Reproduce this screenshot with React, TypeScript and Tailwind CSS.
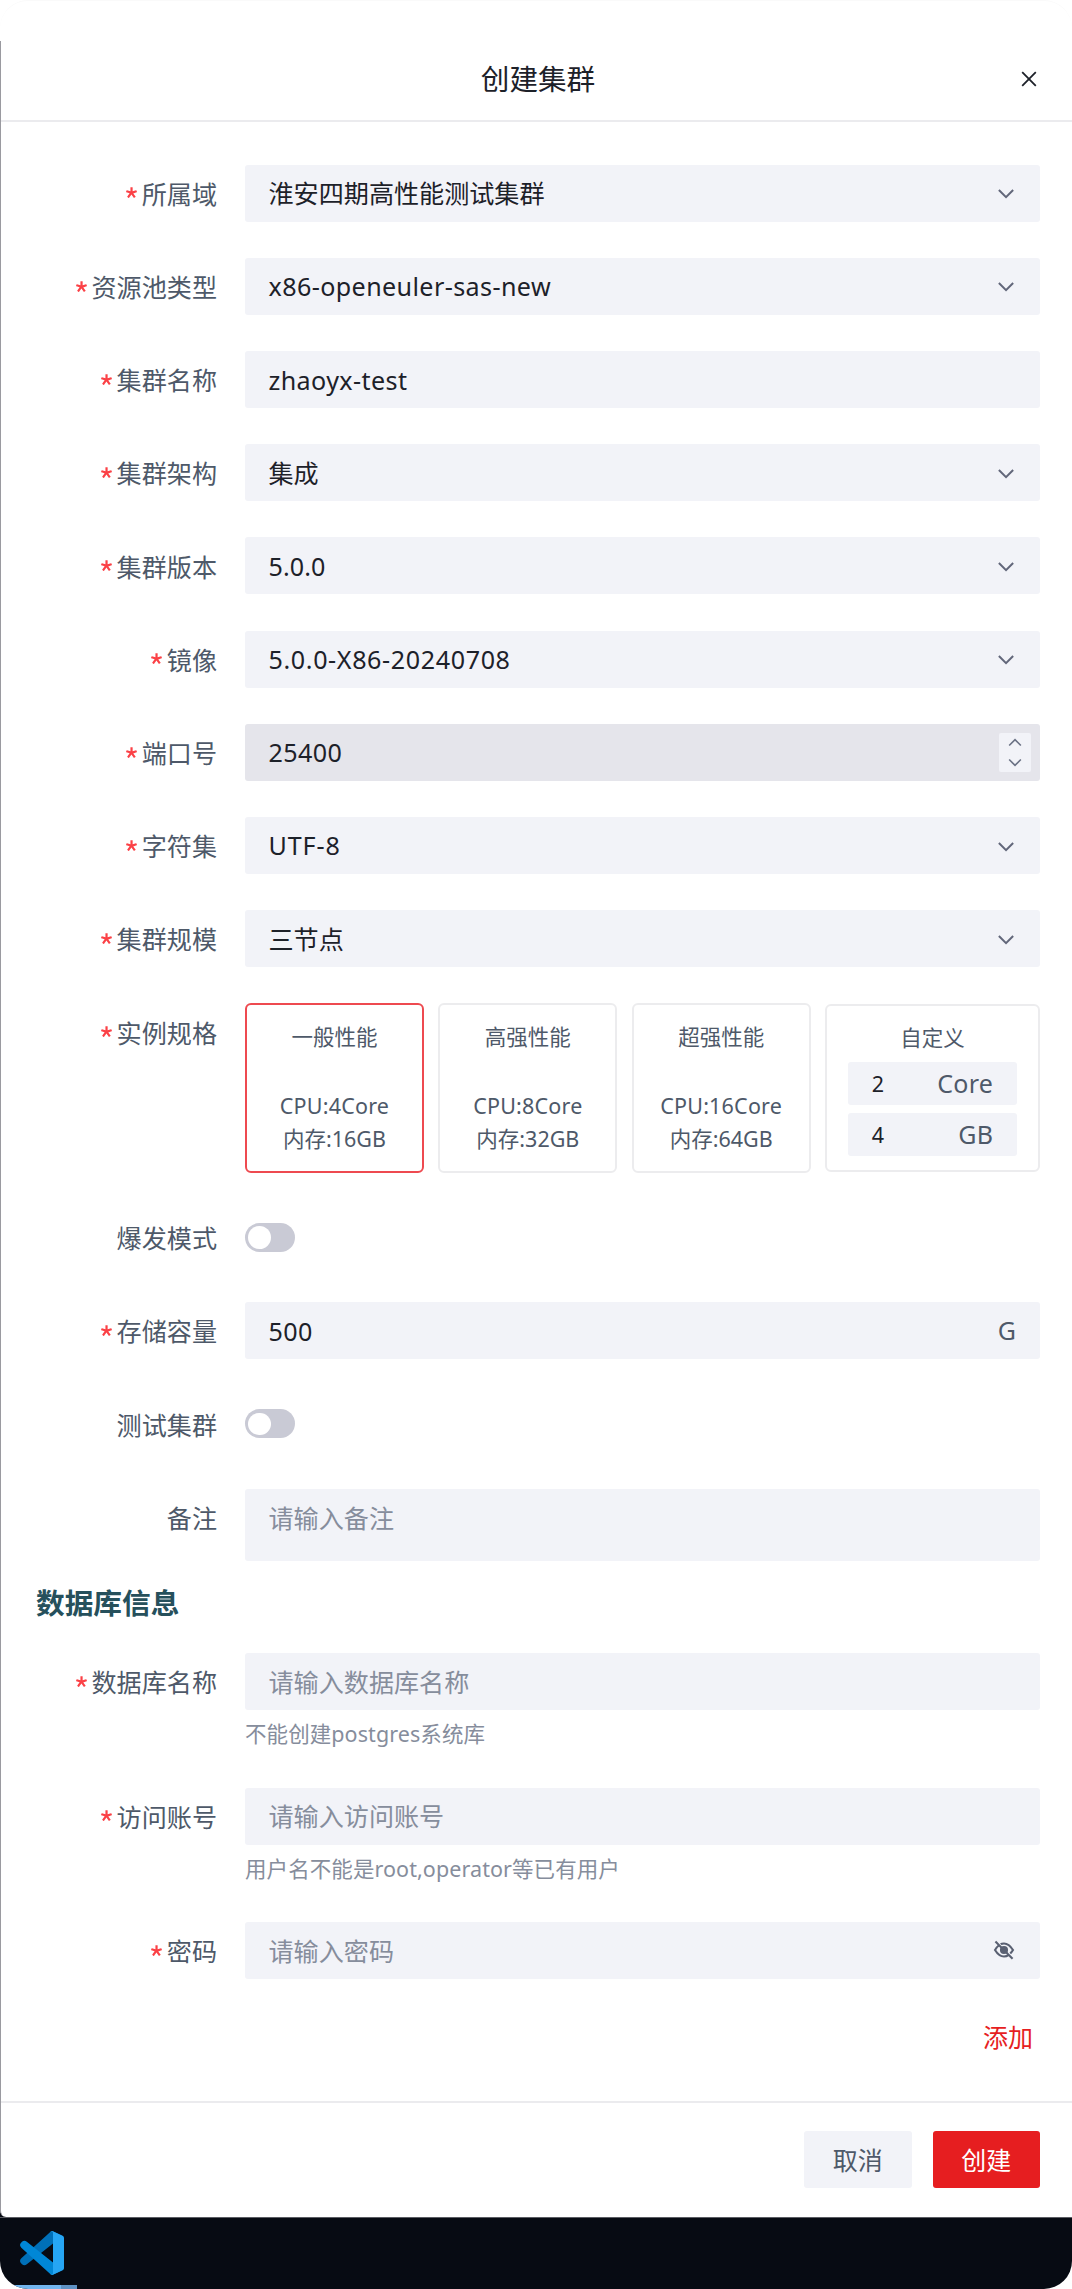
import type { ReactNode } from "react";

function Chevron({ up = false, className = "" }: { up?: boolean; className?: string }) {
  return (
    <svg viewBox="0 0 48 48" fill="none" stroke="currentColor" strokeWidth="4.4" className={className}>
      <path d={up ? "M39.6 30.557 24.043 15 8.487 30.557" : "M39.6 17.443 24.043 33 8.487 17.443"} />
    </svg>
  );
}

function Asterisk() {
  return (
    <svg
      viewBox="0 0 1024 1024"
      fill="currentColor"
      className="mr-[5px] mb-[3px] size-[11px] shrink-0 text-[#fb4146]"
    >
      <path d="M583.338667 17.066667c18.773333 0 34.133333 15.36 34.133333 34.133333v349.013333l313.344-101.888a34.133333 34.133333 0 0 1 43.008 22.016l42.154667 129.706667a34.133333 34.133333 0 0 1-21.845334 43.178667l-315.733333 102.4 208.896 287.744a34.133333 34.133333 0 0 1-7.509333 47.786666l-110.421334 80.213334a34.133333 34.133333 0 0 1-47.786666-7.509334L505.685333 706.218667 288.426667 1005.226667a34.133333 34.133333 0 0 1-47.786667 7.509333l-110.421333-80.213333a34.133333 34.133333 0 0 1-7.509334-47.786667l214.186667-295.253333L29.013333 489.813333a34.133333 34.133333 0 0 1-22.016-43.008l42.154667-129.877333a34.133333 34.133333 0 0 1 43.008-22.016l320.512 104.106667L412.672 51.2c0-18.773333 15.36-34.133333 34.133333-34.133333h136.533334z" />
    </svg>
  );
}

function Row({ label, required = false, children }: { label: string; required?: boolean; children: ReactNode }) {
  return (
    <div className="flex items-start">
      <div className="flex h-[57px] w-[216px] shrink-0 items-center justify-end pt-[2.5px] text-[25.1px] leading-none text-[#4e5969]">
        {required && <Asterisk />}
        <span className="whitespace-nowrap">{label}</span>
      </div>
      <div className="ml-[28px] min-w-0 flex-1">{children}</div>
    </div>
  );
}

function Box({ children, suffix }: { children: ReactNode; suffix?: ReactNode }) {
  return (
    <div className="flex h-[57px] items-center justify-between rounded-[3px] bg-[#f2f3f8] pr-[24px] pl-[23.5px]">
      {children}
      {suffix}
    </div>
  );
}

function Value({ text, className = "tracking-[0.4px]" }: { text: string; className?: string }) {
  return <span className={`pt-px text-[25.1px] leading-none text-[#1d2129] ${className}`}>{text}</span>;
}

function Field({
  label,
  value,
  select = false,
  valueClass,
}: {
  label: string;
  value: string;
  select?: boolean;
  valueClass?: string;
}) {
  return (
    <Row label={label} required>
      <Box suffix={select && <Chevron className="-mr-px size-[22px] text-[#62677a]" />}>
        <Value text={value} className={valueClass} />
      </Box>
    </Row>
  );
}

function Placeholder({ text }: { text: string }) {
  return <span className="pt-[2px] text-[25.1px] leading-none text-[#868d9c]">{text}</span>;
}

function Help({ children }: { children: ReactNode }) {
  return (
    <p className="flex h-[41px] items-start pt-[8px] text-[21.5px] leading-[31px] tracking-[0.08px] text-[#868d9c]">
      {children}
    </p>
  );
}

function Toggle() {
  return (
    <div className="flex h-[57px] items-center">
      <div className="flex h-[29px] w-[50px] items-center rounded-full bg-[#c9cad5] px-[3px]">
        <div className="size-[22.5px] rounded-full bg-white" />
      </div>
    </div>
  );
}

function SpecCard({ title, cpu, mem, active = false }: { title: string; cpu: number; mem: number; active?: boolean }) {
  return (
    <div
      className={`flex h-[170px] w-[179px] shrink-0 flex-col items-center rounded-[6px] border-2 pt-[15px] text-[21.5px] leading-[33px] text-[#4e5969] ${
        active ? "border-[#ee4a50]" : "border-[#ececee]"
      }`}
    >
      <div>{title}</div>
      <div className="mt-[36px] tracking-[0.2px]">CPU:{cpu}Core</div>
      <div>内存:{mem}GB</div>
    </div>
  );
}

function CustomInput({ value, unit }: { value: string; unit: string }) {
  return (
    <div className="flex h-[43px] w-[168.5px] items-center justify-between rounded-[3px] bg-[#f2f3f8] px-[23.5px]">
      <span className="text-[21.5px] leading-none text-[#1d2129]">{value}</span>
      <span className="text-[25px] leading-none tracking-[0.3px] text-[#4e5969]">{unit}</span>
    </div>
  );
}

function EyeOff() {
  return (
    <svg viewBox="0 0 48 48" fill="none" stroke="currentColor" strokeWidth="4.2" className="size-[24px] text-[#5a6072]">
      <path d="M14 14.5c-2.69 2-5.415 5.33-8 9.5 5.373 8.667 11.373 13 18 13 3.325 0 6.491-1.09 9.5-3.271M17.463 12.5C19 11 21.75 11 24 11c6.627 0 12.627 4.333 18 13-1.766 2.848-3.599 5.228-5.5 7.14" />
      <path d="M6.852 7.103l34.294 34.294" />
      <circle cx="24" cy="24" r="6" fill="currentColor" />
    </svg>
  );
}

function CodeLogo() {
  return (
    <svg viewBox="0 0 100 100" className="size-[44px]">
      <path
        fill="#0070b8"
        d="M96.46 10.8 75.86.88a6.23 6.23 0 0 0-7.1 1.21L3 62a8.5 8.5 0 0 0 0 12l1.5 1.5a8.5 8.5 0 0 0 11 0L75 28.5V12l25 4.43a6.25 6.25 0 0 0-3.54-5.63Z"
      />
      <path
        fill="#0087d6"
        d="m96.46 89.2-20.6 9.92a6.23 6.23 0 0 1-7.1-1.21L3 38a8.5 8.5 0 0 1 0-12l1.5-1.5a8.5 8.5 0 0 1 11 0L75 71.5V88l25-4.43a6.25 6.25 0 0 1-3.54 5.63Z"
      />
      <path
        fill="#26a6f4"
        d="M75.86 99.13a6.23 6.23 0 0 1-7.1-1.21A3.66 3.66 0 0 0 75 95.33V4.67a3.66 3.66 0 0 0-6.25-2.59 6.23 6.23 0 0 1 7.1-1.21l20.6 9.91a6.25 6.25 0 0 1 3.55 5.63v67.18a6.25 6.25 0 0 1-3.54 5.63l-20.6 9.91Z"
      />
    </svg>
  );
}

export default function App() {
  return (
    <div className="bg-white">
      <div
        lang="zh-CN"
        className="flex h-[2289px] w-[1072px] flex-col overflow-hidden rounded-b-[28px] bg-[#070b13] font-['Noto_Sans','Noto_Sans_CJK_SC',sans-serif]"
      >
        <div className="h-[41px] shrink-0 bg-white">
          <div className="h-7 rounded-t-[28px] border-t border-[#fafafa]" />
        </div>
        <div className="flex h-[2176px] shrink-0 flex-col rounded-bl-[6px] border-l border-[#9a9aa0] bg-white">
          <header className="relative flex h-[81px] shrink-0 items-center justify-center border-b-2 border-[#ebebee]">
            <h1 className="mb-[2px] ml-[3px] text-[28.6px] leading-none text-[#1d2129]">创建集群</h1>
            <svg
              viewBox="0 0 16 16"
              stroke="#1d2129"
              strokeWidth="1.8"
              className="absolute top-[30px] right-[35px] size-4"
            >
              <path d="m1.2 1.2 13.6 13.6M14.8 1.2 1.2 14.8" />
            </svg>
          </header>

          <main className="flex flex-col pt-[42.7px] pr-8">
            <div className="flex flex-col gap-[36.2px]">
              <Field label="所属域" value="淮安四期高性能测试集群" select valueClass="tracking-normal" />
              <Field label="资源池类型" value="x86-openeuler-sas-new" select />
              <Field label="集群名称" value="zhaoyx-test" />
              <Field label="集群架构" value="集成" select valueClass="tracking-normal" />
              <Field label="集群版本" value="5.0.0" select valueClass="tracking-[0.1px]" />
              <Field label="镜像" value="5.0.0-X86-20240708" select valueClass="tracking-[0.62px]" />
              <Row label="端口号" required>
                <div className="flex h-[57px] items-center justify-between rounded-[3px] bg-[#e5e5eb] pr-[9px] pl-[23.5px]">
                  <Value text="25400" />
                  <div className="flex h-[39px] w-8 flex-col items-center justify-between rounded-xs bg-[#f2f3f8] py-px text-[#6b7285]">
                    <Chevron up className="size-[18px]" />
                    <Chevron className="size-[18px]" />
                  </div>
                </div>
              </Row>
              <Field label="字符集" value="UTF-8" select valueClass="tracking-[0.9px]" />
              <Field label="集群规模" value="三节点" select valueClass="tracking-normal" />
              <Row label="实例规格" required>
                <div className="-mb-[0.5px] flex items-center justify-between">
                  <SpecCard title="一般性能" cpu={4} mem={16} active />
                  <SpecCard title="高强性能" cpu={8} mem={32} />
                  <SpecCard title="超强性能" cpu={16} mem={64} />
                  <div className="flex h-[168px] w-[215px] shrink-0 flex-col items-center rounded-[6px] border-2 border-[#ececee] pt-[15px] text-[#4e5969]">
                    <div className="mb-[8px] text-[21.5px] leading-[33px]">自定义</div>
                    <CustomInput value="2" unit="Core" />
                    <div className="h-[7.5px]" />
                    <CustomInput value="4" unit="GB" />
                  </div>
                </div>
              </Row>
              <Row label="爆发模式">
                <Toggle />
              </Row>
              <Row label="存储容量" required>
                <Box suffix={<span className="text-[25px] leading-none text-[#4e5969]">G</span>}>
                  <Value text="500" />
                </Box>
              </Row>
              <Row label="测试集群">
                <Toggle />
              </Row>
              <Row label="备注">
                <div className="flex h-[72px] items-start rounded-[3px] bg-[#f2f3f8] pt-[15px] pl-[23.5px]">
                  <Placeholder text="请输入备注" />
                </div>
              </Row>
            </div>

            <h2 className="mt-[26.5px] ml-[35px] h-[66px] text-[28.7px] leading-[32px] font-bold text-[#26505c]">
              数据库信息
            </h2>

            <div className="flex flex-col gap-[36.4px]">
              <Row label="数据库名称" required>
                <Box>
                  <Placeholder text="请输入数据库名称" />
                </Box>
                <Help>不能创建postgres系统库</Help>
              </Row>
              <Row label="访问账号" required>
                <Box>
                  <Placeholder text="请输入访问账号" />
                </Box>
                <Help>用户名不能是root,operator等已有用户</Help>
              </Row>
              <Row label="密码" required>
                <Box suffix={<EyeOff />}>
                  <Placeholder text="请输入密码" />
                </Box>
              </Row>
            </div>
            <a className="mt-[46px] mr-[7px] self-end text-[25px] leading-none text-[#e61e22]">添加</a>
          </main>

          <footer className="mt-auto flex h-[116.5px] shrink-0 items-start justify-end gap-[21px] border-t-2 border-[#ebebee] pt-[28px] pr-8 text-[25px] leading-none">
            <button className="h-[57.5px] w-[107.5px] rounded-[3px] bg-[#f2f3f8] pt-[3px] text-[#4e5969]">取消</button>
            <button className="h-[57.5px] w-[107.5px] rounded-[3px] bg-[#e61e20] pt-[3px] text-white">创建</button>
          </footer>
        </div>

        <div className="flex flex-1 flex-col justify-between border-t border-[#5b5d63]">
          <div className="pt-[13px] pl-5">
            <CodeLogo />
          </div>
          <div className="flex h-1">
            <div className="w-[61px] bg-[#72b5ee]" />
            <div className="w-4 bg-[#5f92c4]" />
          </div>
        </div>
      </div>
    </div>
  );
}
